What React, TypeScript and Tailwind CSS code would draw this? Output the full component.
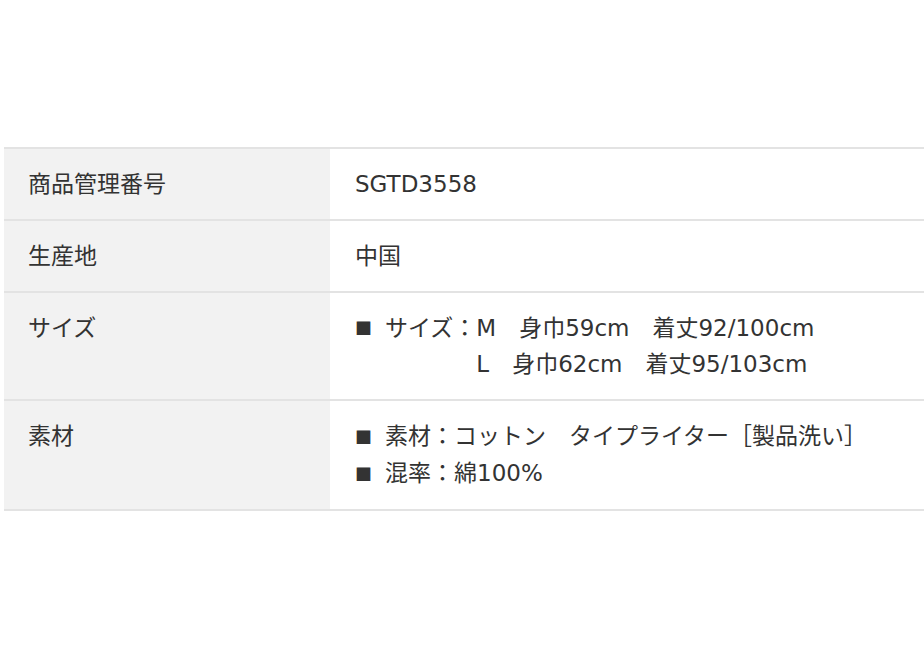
import React from 'react';

const font = { fontFamily: '"DejaVu Sans", "Noto Sans CJK JP", sans-serif' };

const Bullet = () => (
  <span className="inline-block w-[30px] text-[17px] text-[#333]" style={{ fontFamily: '"Noto Sans CJK JP", sans-serif' }}>
    ■
  </span>
);

const Row = ({ label, children }: { label: string; children: React.ReactNode }) => (
  <div className="flex border-b-2 border-[#e3e3e3]">
    <div className="w-[326px] shrink-0 bg-[#f2f2f2] pl-[24px] pt-[17px] pb-[17px]">{label}</div>
    <div className="flex-1 bg-white pl-[25px] pt-[17px] pb-[17px]">{children}</div>
  </div>
);

export default function App() {
  return (
    <div className="h-[660px] w-[924px] bg-white pt-[147px] pl-[4px] text-[23px] leading-[36px] text-[#333]" style={font}>
      <div className="border-t-2 border-[#e3e3e3]">
        <Row label="商品管理番号">SGTD3558</Row>
        <Row label="生産地">中国</Row>
        <Row label="サイズ">
          <div className="flex">
            <Bullet />
            <span>サイズ：</span>
            <div className="flex flex-col">
              <span>M　身巾59cm　着丈92/100cm</span>
              <span>L　身巾62cm　着丈95/103cm</span>
            </div>
          </div>
        </Row>
        <Row label="素材">
          <div><Bullet />素材：コットン　タイプライター［製品洗い］</div>
          <div><Bullet />混率：綿100%</div>
        </Row>
      </div>
    </div>
  );
}
